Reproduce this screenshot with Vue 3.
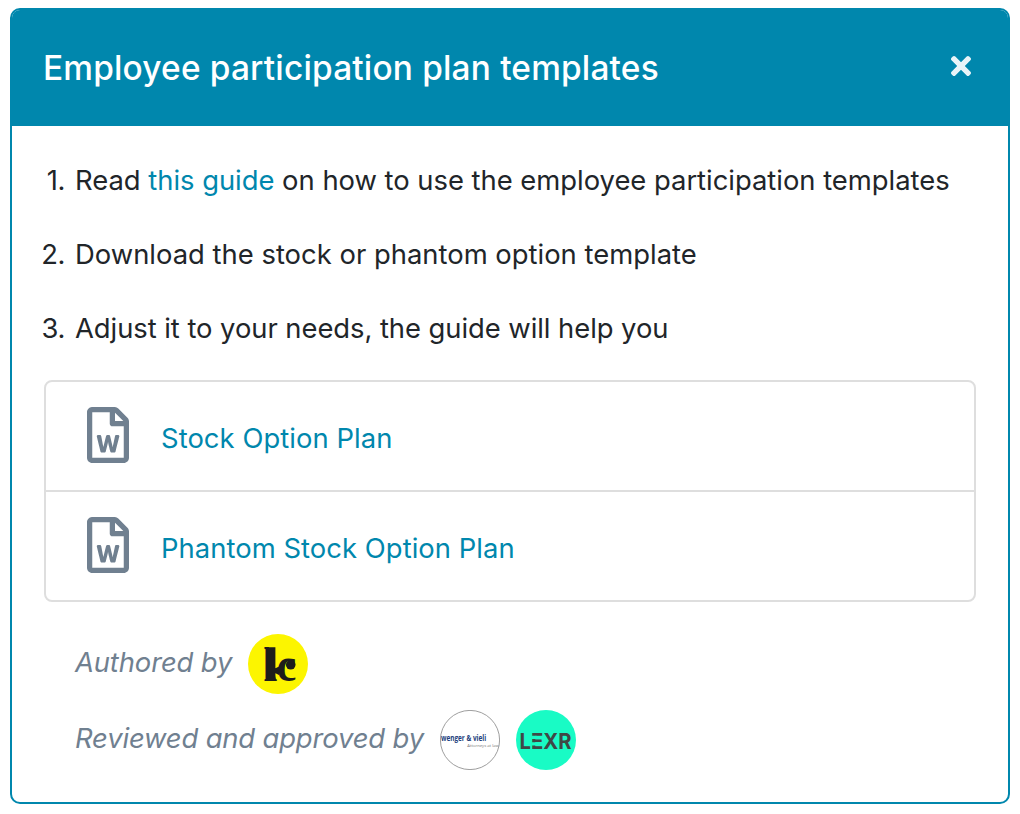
<script setup>
const templates = [
  { name: 'Stock Option Plan', cls: 'stock' },
  { name: 'Phantom Stock Option Plan', cls: 'phantom' },
]
</script>

<template>
  <main class="card">
    <header class="head">
      <h1>Employee participation plan templates</h1>
      <button class="close" aria-label="Close">
        <svg viewBox="0 80 352 352" width="20" height="20">
          <path fill="currentColor" d="M242.7 256l100.1-100.1c12.3-12.3 12.3-32.2 0-44.5l-22.2-22.2c-12.3-12.3-32.2-12.3-44.5 0L176 189.3 75.9 89.2c-12.3-12.3-32.2-12.3-44.5 0L9.2 111.5c-12.3 12.3-12.3 32.2 0 44.5L109.3 256 9.2 356.1c-12.3 12.3-12.3 32.2 0 44.5l22.2 22.2c12.3 12.3 32.2 12.3 44.5 0L176 322.7l100.1 100.1c12.3 12.3 32.2 12.3 44.5 0l22.2-22.2c12.3-12.3 12.3-32.2 0-44.5L242.7 256z" />
        </svg>
      </button>
    </header>
    <section class="body">
      <div class="steps">
        <div class="step"><span class="num">1.</span><span class="s1">Read <a>this guide</a> on how to use the employee participation templates</span></div>
        <div class="step"><span class="num">2.</span><span class="s2">Download the stock or phantom option template</span></div>
        <div class="step"><span class="num">3.</span><span class="s3">Adjust it to your needs, the guide will help you</span></div>
      </div>
      <div class="files">
        <div v-for="t in templates" :key="t.name" class="file">
          <svg class="doc" viewBox="0 0 384 512" width="42" height="56">
            <path fill="currentColor" d="M369.9 97.9L286 14C277 5 264.8-.1 252.1-.1H48C21.5 0 0 21.5 0 48v416c0 26.5 21.5 48 48 48h288c26.5 0 48-21.5 48-48V131.9c0-12.7-5.1-25-14.1-34zM332.1 128H256V51.9l76.1 76.1zM48 464V48h160v104c0 13.3 10.7 24 24 24h104v288H48zm220.1-208c-5.7 0-10.6 4-11.7 9.5-20.6 97.7-20.4 95.4-21 103.5-.2-1.2-.4-2.6-.7-4.3-.8-5.1.3.2-23.6-99.5-1.3-5.4-6.1-9.2-11.7-9.2h-13.3c-5.5 0-10.3 3.8-11.7 9.1-24.4 99-24 96.2-24.8 103.7-.1-1.1-.2-2.5-.5-4.2-.7-5.2-14.1-73.3-19.1-99-1.1-5.6-6-9.7-11.8-9.7h-16.8c-7.8 0-13.5 7.3-11.7 14.8 8 32.6 26.7 109.5 33.2 136 1.3 5.4 6.1 9.1 11.7 9.1h25.2c5.5 0 10.3-3.7 11.6-9.1l17.9-71.4c1.5-6.2 2.5-12 3-17.3l2.9 17.3c.1.4 12.6 50.5 17.9 71.4 1.3 5.3 6.1 9.1 11.6 9.1h24.7c5.5 0 10.3-3.7 11.6-9.1 20.8-81.9 30.2-119 34.5-136 1.9-7.6-3.8-14.9-11.6-14.9h-15.8z" />
          </svg>
          <a :class="t.cls">{{ t.name }}</a>
        </div>
      </div>
      <div class="credit">
        <em class="c1">Authored by</em>
        <svg class="logo" viewBox="0 0 60 60" width="60" height="60">
          <circle cx="30" cy="30" r="30" fill="#fcf500" />
          <g fill="#1d1d1b" font-family="'Liberation Serif', serif" font-weight="700">
            <text x="15.8" y="47" font-size="49" textLength="13" lengthAdjust="spacingAndGlyphs">k</text>
            <path d="M27 20h4v10l-4 5z" fill="#fcf500" />
            <path d="M19.4 13.2h8V47h-8zM27 34.5l4-2V41l-4-2z" />
            <text x="28.8" y="47" font-size="49" textLength="19.6" lengthAdjust="spacingAndGlyphs">c</text>
            <circle cx="42.7" cy="30.8" r="4.8" />
          </g>
        </svg>
      </div>
      <div class="credit">
        <em class="c2">Reviewed and approved by</em>
        <svg class="logo" viewBox="0 0 60 60" width="60" height="60">
          <circle cx="30" cy="30" r="29.6" fill="#fff" stroke="#858585" stroke-width=".8" />
          <g font-family="'Open Sans', sans-serif">
            <text x="1" y="31.2" fill="#243f7d" font-weight="700" font-size="8" textLength="45.2" lengthAdjust="spacingAndGlyphs">wenger &amp; vieli</text>
            <text x="27.3" y="36.8" font-size="4.2" fill="#777" textLength="31.5" lengthAdjust="spacingAndGlyphs">Attorneys at law</text>
          </g>
        </svg>
        <svg class="logo" viewBox="0 0 60 60" width="60" height="60">
          <circle cx="30" cy="30" r="30" fill="#19fbc5" />
          <text x="3.6" y="38.6" fill="#3f4846" font-family="Inter, sans-serif" font-weight="700" font-size="21.5" textLength="52" lengthAdjust="spacingAndGlyphs">LEXR</text>
          <path d="M15.5 25.8h5v3.2h-5zM15.5 32.3h5v3.2h-5z" fill="#19fbc5" />
        </svg>
      </div>
    </section>
  </main>
</template>

<style>
body { background: #fff; }
</style>

<style scoped>
.card {
  box-sizing: border-box;
  width: 1000px;
  height: 796px;
  margin: 8px 10px 0;
  border: 2px solid #0087ad;
  border-radius: 10px;
  overflow: hidden;
  background: #fff;
  font-family: Inter, "Liberation Sans", sans-serif;
  font-size: 27.4px;
  line-height: 42px;
  color: #212529;
  white-space: nowrap;
}
.head {
  display: flex;
  align-items: center;
  justify-content: space-between;
  height: 116px;
  box-sizing: border-box;
  padding: 0 37px 0 31px;
  background: #0087ad;
}
h1 {
  margin: 0;
  color: #fff;
  font-size: 33.4px;
  font-weight: 500;
  line-height: 42px;
  letter-spacing: 0.19px;
}
.close {
  display: flex;
  padding: 0;
  margin-bottom: 4px;
  border: 0;
  background: none;
  color: #e9f4f8;
}
.body { padding: 33px 32px 0; }
.steps { display: flex; flex-direction: column; gap: 32px; }
.step { display: flex; }
.num {
  display: flex;
  justify-content: flex-end;
  width: 21px;
  margin-right: 10px;
  letter-spacing: -0.4px;
}
.s1 { letter-spacing: -0.015px; }
.s2 { letter-spacing: 0.01px; }
.s3 { letter-spacing: -0.05px; }
.stock { letter-spacing: 0.06px; }
.phantom { letter-spacing: 0.05px; }
a { color: #0087ad; }
.files {
  margin-top: 31px;
  border: 2px solid #dedede;
  border-radius: 8px;
}
.file {
  display: flex;
  align-items: center;
  box-sizing: border-box;
  height: 108px;
  padding: 0 41px 2px;
}
.file + .file { height: 110px; border-top: 2px solid #dedede; }
.doc { color: #708090; margin-right: 32px; }
.file a { margin-top: 6px; }
.credit {
  display: flex;
  align-items: center;
  height: 60px;
  margin-top: 16px;
  padding-left: 31px;
  color: #708090;
}
.credit em { margin-bottom: 4px; }
.c1 { letter-spacing: -0.12px; }
.c2 { letter-spacing: -0.145px; }
.files + .credit { margin-top: 32px; }
.logo { margin-left: 16px; flex: none; }
</style>
